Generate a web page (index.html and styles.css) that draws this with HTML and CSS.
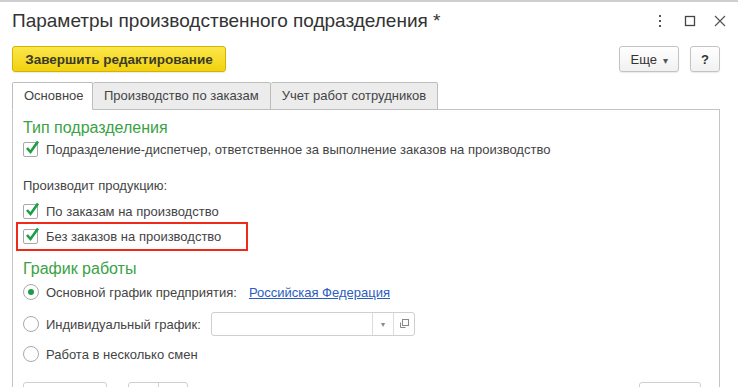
FILE: index.html
```html
<!DOCTYPE html>
<html lang="ru">
<head>
  <meta charset="UTF-8" />
  <title>Параметры производственного подразделения</title>
  <link rel="stylesheet" href="styles.css">
</head>
<body>
  <div class="window">

    <div class="titlebar">
      <h1>Параметры производственного подразделения *</h1>
      <div class="win-controls">
        <svg class="win-icon" width="14" height="14" viewBox="0 0 14 14"><rect x="6" y="1" width="2" height="2" fill="#555"/><rect x="6" y="6" width="2" height="2" fill="#555"/><rect x="6" y="11" width="2" height="2" fill="#555"/></svg>
        <svg class="win-icon" width="14" height="14" viewBox="0 0 14 14"><rect x="2.5" y="2.5" width="9" height="9" fill="none" stroke="#444" stroke-width="1.3"/></svg>
        <svg class="win-icon" width="14" height="14" viewBox="0 0 14 14"><path d="M2 2 L12 12 M12 2 L2 12" stroke="#555" stroke-width="1.2"/></svg>
      </div>
    </div>

    <!-- Command bar -->
    <div class="toolbar">
      <button class="btn btn-default">Завершить редактирование</button>
      <div class="toolbar-right">
        <button class="btn btn-more">Еще <span class="caret">&#9662;</span></button>
        <button class="btn btn-help">?</button>
      </div>
    </div>

    <div class="tabs">
      <div class="tab active">Основное</div>
      <div class="tab">Производство по заказам</div>
      <div class="tab">Учет работ сотрудников</div>
    </div>

    <div class="panel">
      <div class="group-title">Тип подразделения</div>
      <label class="row">
        <span class="checkbox"><svg width="18" height="18" viewBox="0 0 18 18"><path d="M4 9 L7.5 13 L15 2.5" fill="none" stroke="#1b9e46" stroke-width="2.6"/></svg></span>
        Подразделение-диспетчер, ответственное за выполнение заказов на производство
      </label>

      <div class="row caption">Производит продукцию:</div>
      <label class="row row-tight">
        <span class="checkbox"><svg width="18" height="18" viewBox="0 0 18 18"><path d="M4 9 L7.5 13 L15 2.5" fill="none" stroke="#1b9e46" stroke-width="2.6"/></svg></span>
        По заказам на производство
      </label>
      <div class="highlight">
        <label class="row">
          <span class="checkbox"><svg width="18" height="18" viewBox="0 0 18 18"><path d="M4 9 L7.5 13 L15 2.5" fill="none" stroke="#1b9e46" stroke-width="2.6"/></svg></span>
          Без заказов на производство
        </label>
      </div>

      <div class="group-title second">График работы</div>
      <label class="row">
        <span class="radio checked"></span>
        Основной график предприятия:
        <a class="link" href="#">Российская Федерация</a>
      </label>
      <label class="row row-input">
        <span class="radio"></span>
        Индивидуальный график:
        <span class="field">
          <span class="field-text"></span>
          <span class="field-btn"><span class="small-caret">&#9662;</span></span>
          <span class="field-btn">
            <svg width="12" height="12" viewBox="0 0 12 12"><rect x="4.5" y="1.5" width="6" height="6" fill="none" stroke="#888"/><path d="M2.5 4.5 V9.5 H7.5" fill="none" stroke="#888"/></svg>
          </span>
        </span>
      </label>
      <label class="row row-last">
        <span class="radio"></span>
        Работа в несколько смен
      </label>

      <div class="bottom-row">
        <span class="stub stub-wide"></span>
        <span class="stub stub-split"><span></span><span></span></span>
        <span class="stub stub-right"></span>
      </div>
    </div>

  </div>
</body>
</html>
```

FILE: styles.css
```css
body {
  margin: 0;
  font-family: "Liberation Sans", Arial, sans-serif;
  color: #444;
  background: #fff;
  height: 387px;
  overflow: hidden;
}

.window {
  border-top: 2px solid #cfcfcf;
  padding: 0 18px 0 12px;
  height: 385px;
  overflow: hidden;
}

.titlebar {
  display: flex;
  align-items: center;
  justify-content: space-between;
  height: 38px;
}

h1 {
  margin: 0;
  font-size: 19px;
  font-weight: normal;
  color: #333;
}

.win-controls {
  display: flex;
  gap: 16px;
  margin-right: -7px;
}

.toolbar {
  display: flex;
  justify-content: space-between;
  margin-top: 6px;
}

.toolbar-right {
  display: flex;
  gap: 11px;
}

.btn {
  height: 26px;
  font-family: inherit;
  font-size: 13px;
  color: #333;
  border: 1px solid #c3c3c3;
  border-radius: 3px;
  background: linear-gradient(#ffffff, #f1f1f1);
  padding: 0 10px;
  box-shadow: 0 1px 1px rgba(0,0,0,0.08);
}

.btn-default {
  width: 214px;
  font-weight: bold;
  font-size: 13.5px;
  border-color: #d2b400;
  background: linear-gradient(#fbe64a, #f2d20e);
  color: #3a3a2a;
}

.btn-more {
  width: 60px;
}

.caret {
  font-size: 10px;
  margin-left: 2px;
  color: #555;
}

.btn-help {
  width: 30px;
  font-weight: bold;
  padding: 0;
}

.tabs {
  display: flex;
  margin-top: 10px;
  position: relative;
  z-index: 1;
}

.tab {
  height: 26px;
  line-height: 26px;
  padding: 0 11px;
  font-size: 13px;
  color: #444;
  background: #ececec;
  border: 1px solid #bdbdbd;
  border-left: none;
  border-radius: 2px 2px 0 0;
}

.tab:first-child {
  border-left: 1px solid #bdbdbd;
}

.tab.active {
  background: #fff;
  border-bottom-color: #fff;
  width: 57px;
}

.panel {
  border: 1px solid #c4c4c4;
  margin-top: -1px;
  padding: 8px 10px 0 10px;
  height: 290px;
  overflow: hidden;
  font-size: 13px;
}

.group-title {
  height: 20px;
  line-height: 20px;
  font-size: 16px;
  color: #3aa246;
}

.group-title.second {
  margin-top: 6px;
  height: 24px;
  line-height: 24px;
}

.row {
  display: flex;
  align-items: center;
  height: 22px;
  color: #444;
}

.caption {
  margin-top: 14px;
}

.row-tight {
  margin-top: 4px;
}

.checkbox {
  position: relative;
  width: 13px;
  height: 13px;
  border: 1px solid #a9a9a9;
  border-radius: 2px;
  background: #fff;
  margin-right: 8px;
  flex-shrink: 0;
}

.checkbox svg {
  position: absolute;
  left: -1px;
  top: -4px;
}

.highlight {
  width: 223px;
  height: 25px;
  border: 2px solid #f02a1a;
  margin-left: -7px;
  padding-left: 5px;
  display: flex;
  align-items: center;
}

.radio {
  width: 14px;
  height: 14px;
  border: 1px solid #aaa;
  border-radius: 50%;
  margin-right: 7px;
  flex-shrink: 0;
  display: flex;
  align-items: center;
  justify-content: center;
}

.radio.checked::after {
  content: "";
  width: 6px;
  height: 6px;
  border-radius: 50%;
  background: #1e9a48;
}

.link {
  margin-left: 12px;
  color: #2b5cc0;
  text-decoration: underline;
}

.row-input {
  height: 24px;
  margin-top: 9px;
}

.field {
  display: flex;
  height: 22px;
  width: 202px;
  margin-left: 10px;
  border: 1px solid #cfcfcf;
  border-radius: 3px;
}

.field-text {
  flex: 1;
}

.field-btn {
  width: 20px;
  border-left: 1px solid #dcdcdc;
  display: flex;
  align-items: center;
  justify-content: center;
}

.small-caret {
  font-size: 8px;
  color: #888;
}

.row-last {
  margin-top: 7px;
}

.bottom-row {
  display: flex;
  margin-top: 17px;
}

.stub {
  height: 24px;
  border: 1px solid #cfcfcf;
  border-radius: 3px;
}

.stub-wide {
  width: 82px;
}

.stub-split {
  display: flex;
  width: 58px;
  margin-left: 21px;
}

.stub-split span {
  flex: 1;
}

.stub-split span + span {
  border-left: 1px solid #cfcfcf;
}

.stub-right {
  width: 60px;
  margin-left: auto;
  margin-right: 8px;
}
```
